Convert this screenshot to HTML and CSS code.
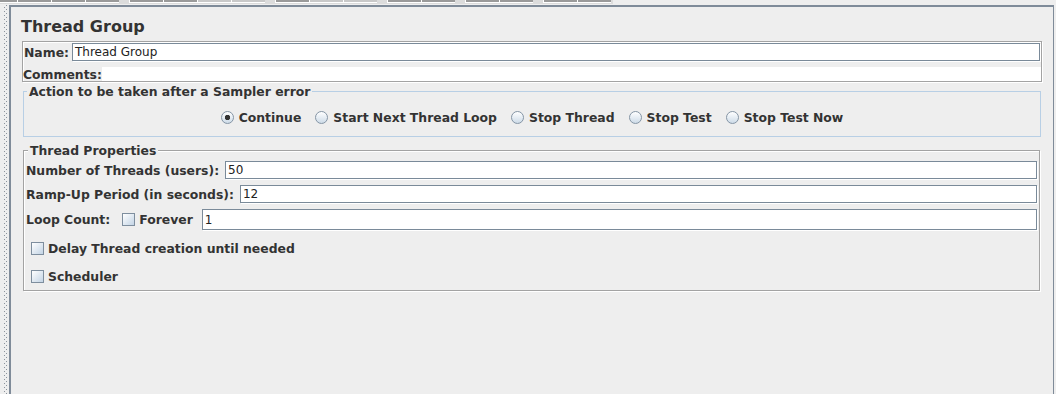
FILE: index.html
```html
<!DOCTYPE html>
<html>
<head>
<meta charset="utf-8">
<title>Thread Group</title>
<link rel="stylesheet" href="styles.css">
</head>
<body>
<div class="toolbar">
  <div class="tb-group">
    <span class="tb-btn first"></span><span class="tb-btn"></span><span class="tb-btn"></span><span class="tb-btn"></span>
  </div>
  <div class="tb-group">
    <span class="tb-btn"></span><span class="tb-btn"></span><span class="tb-btn off"></span><span class="tb-btn off"></span>
  </div>
  <div class="tb-group">
    <span class="tb-btn"></span><span class="tb-btn off"></span><span class="tb-btn off"></span>
  </div>
  <div class="tb-group">
    <span class="tb-btn"></span><span class="tb-btn"></span>
  </div>
  <div class="tb-group">
    <span class="tb-btn"></span><span class="tb-btn"></span>
  </div>
  <div class="tb-group">
    <span class="tb-btn"></span><span class="tb-btn"></span>
  </div>
</div>
<div class="workspace">
  <div class="splitter"></div>
  <div class="frame">
    <div class="title">Thread Group</div>

    <div class="namebox">
      <div class="name-row">
        <span class="lbl name-lbl">Name:</span>
        <div class="field name-field">Thread Group</div>
      </div>
      <div class="comments-row">
        <span class="lbl">Comments:</span>
        <div class="textarea"></div>
      </div>
    </div>

    <fieldset class="action">
      <legend>Action to be taken after a Sampler error</legend>
      <div class="radios">
        <span class="opt"><span class="radio on"></span><span class="lbl">Continue</span></span>
        <span class="opt"><span class="radio"></span><span class="lbl">Start Next Thread Loop</span></span>
        <span class="opt"><span class="radio"></span><span class="lbl">Stop Thread</span></span>
        <span class="opt"><span class="radio"></span><span class="lbl">Stop Test</span></span>
        <span class="opt"><span class="radio"></span><span class="lbl">Stop Test Now</span></span>
      </div>
    </fieldset>

    <fieldset class="props">
      <legend>Thread Properties</legend>
      <div class="prow">
        <span class="lbl">Number of Threads (users):</span>
        <div class="field pfield">50</div>
      </div>
      <div class="prow">
        <span class="lbl">Ramp-Up Period (in seconds):</span>
        <div class="field pfield">12</div>
      </div>
      <div class="prow loop">
        <span class="lbl">Loop Count:</span>
        <span class="check loop-check"></span>
        <span class="lbl forever">Forever</span>
        <div class="field loop-field">1</div>
      </div>
      <div class="crow first-crow">
        <span class="check"></span>
        <span class="lbl">Delay Thread creation until needed</span>
      </div>
      <div class="crow second-crow">
        <span class="check"></span>
        <span class="lbl">Scheduler</span>
      </div>
    </fieldset>
  </div>
</div>
</body>
</html>
```

FILE: styles.css
```css
* {
  box-sizing: border-box;
}

html, body {
  margin: 0;
  padding: 0;
}

body {
  width: 1056px;
  height: 394px;
  overflow: hidden;
  background: #eeeeee;
  font-family: "DejaVu Sans", "Noto Sans", sans-serif;
  color: #333333;
}

/* top toolbar remnant */
.toolbar {
  height: 5px;
  display: flex;
  align-items: flex-start;
}

.tb-group {
  display: flex;
  height: 4px;
  background: #dcdcdc;
  padding-right: 10px;
}

.tb-group:last-child {
  padding-right: 2px;
}

.tb-btn {
  display: block;
  width: 34px;
  height: 3px;
  background: #9a9a9a;
  border-left: 1px solid #ffffff;
  border-bottom: 1px solid #ffffff;
}

.tb-btn.first {
  width: 17px;
  border-left: none;
}

.tb-btn.off {
  background: #c9c9c9;
}

/* workspace */
.workspace {
  display: flex;
  height: 389px;
}

.splitter {
  flex: 0 0 9px;
  background-image:
    linear-gradient(#8a929b 0 1px, transparent 1px),
    linear-gradient(#8a929b 0 1px, transparent 1px);
  background-size: 1px 4px, 1px 4px;
  background-repeat: repeat-y, repeat-y;
  background-position: 4px 2px, 6px 0px;
}

.frame {
  flex: 0 0 1045px;
  border-left: 2px solid #7f8b99;
  border-top: 2px solid #7f8b99;
  border-right: 1px solid #7f8b99;
  display: flex;
  flex-direction: column;
}

.title {
  margin-top: 10px;
  padding-left: 10px;
  font-size: 16px;
  font-weight: bold;
  line-height: 20px;
  height: 20px;
  color: #333333;
}

.lbl {
  font-weight: bold;
  font-size: 12.4px;
  line-height: 15px;
  color: #333333;
  white-space: nowrap;
}

.field {
  background: #ffffff;
  border: 1px solid #7a8a99;
  box-shadow: 1px 1px 0 #ffffff;
  font-size: 12px;
  color: #222222;
  padding-left: 2px;
  display: flex;
  align-items: center;
  white-space: nowrap;
}

/* name / comments box */
.namebox {
  margin: 4px 11px 0 11px;
  border: 1px solid #a3a3a3;
  box-shadow: inset 1px 1px 0 #ffffff, 1px 1px 0 #ffffff;
  padding-top: 1px;
}

.name-row {
  display: flex;
  align-items: center;
  height: 18px;
}

.name-lbl {
  margin-left: 1px;
}

.name-field {
  flex: 1;
  height: 18px;
  margin-left: 3px;
  margin-right: 1px;
}

.comments-row {
  display: flex;
  align-items: center;
  height: 14px;
  margin-top: 6px;
}

.textarea {
  flex: 1;
  height: 14px;
  background: #ffffff;
}

/* titled panels */
fieldset {
  min-width: 0;
  margin: 0;
}

legend {
  font-weight: bold;
  font-size: 12.4px;
  line-height: 15px;
  color: #333333;
  padding: 0 2px;
  background: #eeeeee;
  white-space: nowrap;
}

.action {
  margin: 2px 12px 0 12px;
  border: 1px solid #b8cfe5;
  padding: 9px 0 10px 0;
}

.action legend {
  margin-left: 3px;
}

.radios {
  display: flex;
  justify-content: center;
  align-items: center;
  height: 18px;
  gap: 14px;
}

.opt {
  display: flex;
  align-items: center;
}

.radio {
  flex: none;
  width: 13px;
  height: 13px;
  border-radius: 50%;
  border: 1px solid #8595a5;
  background: linear-gradient(#ffffff, #cddbe8);
  margin-right: 5px;
}

.radio.on {
  background:
    radial-gradient(circle at 50% 50%, #333333 0 2.4px, transparent 3px),
    linear-gradient(#ffffff, #cddbe8);
}

.props {
  margin: 6px 13px 0 12px;
  border: 1px solid #a3a3a3;
  box-shadow: inset 1px 1px 0 #ffffff, 1px 1px 0 #ffffff;
  padding: 3px 2px 2px 2px;
}

.props legend {
  margin-left: 2px;
}

.prow {
  display: flex;
  align-items: center;
  height: 18px;
  margin-bottom: 6px;
}

.pfield {
  flex: 1;
  height: 18px;
  margin-left: 6px;
}

.prow.loop {
  height: 21px;
  margin-bottom: 0;
}

.check {
  flex: none;
  width: 13px;
  height: 13px;
  border: 1px solid #7e8e9e;
  background: linear-gradient(135deg, #ffffff, #c3d4e5);
}

.loop-check {
  margin-left: 12px;
}

.forever {
  margin-left: 4px;
}

.loop-field {
  flex: 1;
  height: 21px;
  margin-left: 9px;
}

.crow {
  display: flex;
  align-items: center;
  height: 24px;
}

.crow .check {
  margin-left: 5px;
}

.crow .lbl {
  margin-left: 4px;
}

.first-crow {
  margin-top: 6px;
}

.second-crow {
  margin-top: 4px;
}
```
